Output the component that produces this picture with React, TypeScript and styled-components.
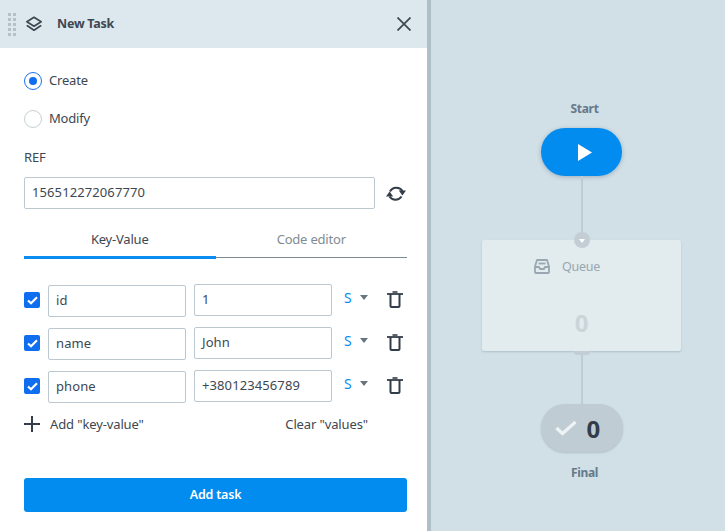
import React from 'react';
import styled, { createGlobalStyle } from 'styled-components';

const Global = createGlobalStyle`
  html, body { margin: 0; padding: 0; width: 725px; height: 531px; overflow: hidden; background: #d1dfe6; }
  * { box-sizing: border-box; }
  body { font-family: "Noto Sans", "Open Sans", sans-serif; color: #3d4752; }
`;

const Page = styled.div`
  display: flex;
  width: 725px;
  height: 531px;
`;
const Panel = styled.div`
  width: 427px;
  height: 531px;
  background: #fff;
  display: flex;
  flex-direction: column;
  flex: none;
`;
const Divider = styled.div`
  width: 4px;
  flex: none;
  background: #aebfc7;
`;
const Header = styled.div`
  height: 48px;
  background: #dde8ee;
  display: flex;
  align-items: center;
  padding: 0 16px 0 8px;
  flex: none;
`;
const Grip = styled.div`
  display: grid;
  grid-template-columns: 3px 3px;
  gap: 2px 2px;
  margin-right: 10px;
  span { width: 3px; height: 3px; background: #b4c1c8; display: block; }
`;
const Title = styled.div`
  font-size: 12.5px;
  font-weight: 700;
  letter-spacing: -0.25px;
  margin-left: 15px;
  flex: 1;
  position: relative;
  top: -1px;
`;
const Body = styled.div`
  padding: 0 20px 0 24px;
  display: flex;
  flex-direction: column;
  flex: 1;
`;
const RadioRow = styled.div<{ $top: number }>`
  display: flex;
  align-items: center;
  gap: 7px;
  height: 18px;
  margin-top: ${p => p.$top}px;
  font-size: 13px;
  letter-spacing: -0.2px;
`;
const RadioText = styled.span`
  position: relative;
  top: -1px;
`;
const RadioDot = styled.div<{ $on?: boolean }>`
  width: 18px;
  height: 18px;
  border-radius: 50%;
  border: 1px solid ${p => (p.$on ? '#1a73f0' : '#c5d0d6')};
  display: flex;
  align-items: center;
  justify-content: center;
  &::after {
    content: '';
    width: 8px;
    height: 8px;
    border-radius: 50%;
    background: ${p => (p.$on ? '#0f6df0' : 'transparent')};
  }
`;
const RefLabel = styled.div`
  font-size: 13px;
  letter-spacing: -0.2px;
  margin-top: 20px;
  height: 18px;
  line-height: 18px;
`;
const RefRow = styled.div`
  display: flex;
  align-items: center;
  margin-top: 11px;
`;
const Field = styled.div<{ $w: number; $shift?: number }>`
  width: ${p => p.$w}px;
  height: 32px;
  border: 1px solid #bcc8cf;
  border-radius: 2px;
  padding: 0 7px 2px;
  font-size: 13px;
  letter-spacing: 0.1px;
  display: flex;
  align-items: center;
  flex: none;
  position: relative;
  top: ${p => p.$shift ?? 0}px;
  background: #fff;
`;
const RefreshBtn = styled.div`
  margin-left: 11px;
  width: 20px;
  height: 18px;
  display: flex;
  position: relative;
  top: 1px;
`;
const Tabs = styled.div`
  display: flex;
  width: 383px;
  height: 49px;
  border-bottom: 1px solid #7d8a91;
`;
const Tab = styled.div<{ $active?: boolean }>`
  width: 50%;
  height: ${p => (p.$active ? '50px' : '49px')};
  padding-top: 21px;
  text-align: center;
  font-size: 13px;
  line-height: 18px;
  letter-spacing: -0.2px;
  color: ${p => (p.$active ? '#3d4752' : '#808c93')};
  border-bottom: ${p => (p.$active ? '3px solid #0a8cf0' : 'none')};
`;
const Rows = styled.div`
  margin-top: 27px;
  display: flex;
  flex-direction: column;
  gap: 11px;
`;
const Row = styled.div`
  display: flex;
  align-items: center;
  height: 32px;
`;
const Check = styled.div`
  width: 16px;
  height: 16px;
  border-radius: 2px;
  background: #0f6df0;
  margin: 0 8px 2px 0;
  display: flex;
  align-items: center;
  justify-content: center;
  flex: none;
`;
const TypeSel = styled.div`
  display: flex;
  align-items: center;
  margin-left: 12px;
  width: 43px;
  color: #0a8cf0;
  font-size: 14px;
  position: relative;
  top: -4px;
  &::after {
    content: '';
    margin-left: 8px;
    border-left: 4.5px solid transparent;
    border-right: 4.5px solid transparent;
    border-top: 5px solid #66757e;
  }
`;
const ValueGap = styled.div`
  width: 8px;
  flex: none;
`;
const Footer = styled.div`
  display: flex;
  align-items: center;
  margin-top: 11px;
  height: 20px;
  font-size: 13px;
  letter-spacing: -0.12px;
`;
const AddLabel = styled.span`
  margin-left: 10px;
  flex: 1;
`;
const ClearLabel = styled.span`
  margin-right: 39px;
`;
const AddButton = styled.div`
  width: 383px;
  height: 34px;
  margin-top: 44px;
  background: #038cf0;
  border-radius: 3px;
  color: #fff;
  font-size: 12.5px;
  font-weight: 600;
  letter-spacing: -0.2px;
  display: flex;
  align-items: center;
  justify-content: center;
  padding-bottom: 2px;
`;

const Canvas = styled.div`
  flex: 1;
  background: #d1dfe6;
  display: flex;
  flex-direction: column;
  align-items: center;
  padding: 100px 44px 0 51px;
`;
const NodeLabel = styled.div`
  font-size: 12px;
  font-weight: 700;
  letter-spacing: -0.3px;
  color: #64798a;
  height: 18px;
  line-height: 18px;
  position: relative;
  left: 3px;
`;
const StartPill = styled.div`
  width: 81px;
  height: 48px;
  border-radius: 24px;
  margin-top: 10px;
  background: #038cf0;
  box-shadow: 0 1px 4px rgba(60, 90, 110, 0.35);
  display: flex;
  align-items: center;
  justify-content: center;
  padding-left: 6px;
`;
const Line = styled.div<{ $h: number; $top?: number }>`
  width: 2px;
  height: ${p => p.$h}px;
  margin-top: ${p => p.$top ?? 0}px;
  background: #bfccd3;
  flex: none;
`;
const Card = styled.div`
  width: 199px;
  height: 111px;
  background: #e2ebee;
  border-radius: 2px;
  box-shadow: 0 1px 2px rgba(80, 100, 115, 0.25);
  position: relative;
  display: flex;
  flex-direction: column;
  align-items: center;
  flex: none;
  margin-top: 6px;
`;
const Port = styled.div`
  position: absolute;
  top: -8px;
  left: 92px;
  width: 16px;
  height: 16px;
  border-radius: 50%;
  background: #c2ced4;
  display: flex;
  align-items: center;
  justify-content: center;
  &::after {
    content: '';
    margin-top: 1px;
    border-left: 3px solid transparent;
    border-right: 3px solid transparent;
    border-top: 4px solid #fff;
  }
`;
const BottomPort = styled.div`
  position: absolute;
  bottom: -4px;
  left: 92px;
  width: 16px;
  height: 4px;
  background: #c2ced4;
  border-radius: 0 0 3px 3px;
`;
const QueueRow = styled.div`
  display: flex;
  align-items: center;
  align-self: flex-start;
  margin: 17px 0 0 52px;
  height: 18px;
  color: #98a7b0;
  font-size: 12.5px;
  letter-spacing: -0.25px;
  gap: 12px;
`;
const QueueCount = styled.div`
  margin-top: 33px;
  font-size: 24px;
  font-weight: 700;
  line-height: 30px;
  color: #cad5da;
`;
const FinalPill = styled.div`
  width: 82px;
  height: 48px;
  border-radius: 24px;
  background: #bfccd3;
  box-shadow: 0 1px 2px rgba(80, 100, 115, 0.25);
  display: flex;
  align-items: center;
  padding-left: 14px;
  gap: 10px;
  flex: none;
  font-size: 24px;
  font-weight: 700;
  color: #333d49;
`;
const FinalLabel = styled(NodeLabel)`
  margin-top: 12px;
`;

const rows = [
  ['id', '1'],
  ['name', 'John'],
  ['phone', '+380123456789'],
];

const TrashIcon = () => (
  <svg width="16" height="17" viewBox="0 0 16 17" fill="none" stroke="#333d49" strokeWidth="2" style={{ position: 'relative', top: -2 }}>
    <path d="M0 3H16" strokeWidth="1.8" />
    <path d="M5.5 1H10.5" strokeWidth="1.6" />
    <path d="M3.5 3V15C3.5 15.6 3.9 16 4.5 16H11.5C12.1 16 12.5 15.6 12.5 15V3" />
  </svg>
);

export default function App() {
  return (
    <Page>
      <Global />
      <Panel>
        <Header>
          <Grip>
            {Array.from({ length: 10 }).map((_, i) => <span key={i} />)}
          </Grip>
          <svg width="16" height="16" viewBox="0 0 18 18" fill="none" stroke="#3d4752" strokeWidth="1.9" strokeLinejoin="round" strokeLinecap="round">
            <path d="M9 1.5L17 6.5L9 11.5L1 6.5Z" />
            <path d="M1.5 11L9 16L16.5 11" />
          </svg>
          <Title>New Task</Title>
          <svg width="14" height="14" viewBox="0 0 14 14" stroke="#3d4752" strokeWidth="1.7" fill="none">
            <path d="M0.5 0.5L13.5 13.5M13.5 0.5L0.5 13.5" />
          </svg>
        </Header>
        <Body>
          <RadioRow $top={24}><RadioDot $on /><RadioText>Create</RadioText></RadioRow>
          <RadioRow $top={20}><RadioDot /><RadioText>Modify</RadioText></RadioRow>
          <RefLabel>REF</RefLabel>
          <RefRow>
            <Field $w={351}>156512272067770</Field>
            <RefreshBtn>
              <svg width="20" height="18" viewBox="0 0 20 18" fill="none" stroke="#333d49" strokeWidth="2">
                <path d="M4 6.5A7 6.5 0 0 1 16.5 6" />
                <path d="M3.5 11.5A7 6.5 0 0 0 15.5 11.5" />
                <path d="M12.8 5.5H20L16.4 10.5Z" fill="#333d49" stroke="none" />
                <path d="M0 11.5H7.2L3.6 6.5Z" fill="#333d49" stroke="none" />
              </svg>
            </RefreshBtn>
          </RefRow>
          <Tabs>
            <Tab $active>Key-Value</Tab>
            <Tab>Code editor</Tab>
          </Tabs>
          <Rows>
            {rows.map(([k, v]) => (
              <Row key={k}>
                <Check>
                  <svg width="11" height="9" viewBox="0 0 11 9" fill="none" stroke="#fff" strokeWidth="2.2">
                    <path d="M1 4.5L4 7.2L10 1.2" />
                  </svg>
                </Check>
                <Field $w={138}>{k}</Field>
                <ValueGap />
                <Field $w={138} $shift={-1}>{v}</Field>
                <TypeSel>S</TypeSel>
                <TrashIcon />
              </Row>
            ))}
          </Rows>
          <Footer>
            <svg width="16" height="16" viewBox="0 0 16 16" stroke="#333d49" strokeWidth="2" fill="none">
              <path d="M8 0V16M0 8H16" />
            </svg>
            <AddLabel>Add "key-value"</AddLabel>
            <ClearLabel>Clear "values"</ClearLabel>
          </Footer>
          <AddButton>Add task</AddButton>
        </Body>
      </Panel>
      <Divider />
      <Canvas>
        <NodeLabel>Start</NodeLabel>
        <StartPill>
          <svg width="14" height="17" viewBox="0 0 14 17"><path d="M0 0L14 8.5L0 17Z" fill="#fff" /></svg>
        </StartPill>
        <Line $h={58} />
        <Card>
          <Port />
          <QueueRow>
            <svg width="16" height="15" viewBox="0 0 16 15" fill="none" stroke="#98a7b0" strokeWidth="1.8" strokeLinejoin="round">
              <path d="M3 1H13L15 7.5V13C15 13.6 14.6 14 14 14H2C1.4 14 1 13.6 1 13V7.5Z" />
              <path d="M1 8H5L6 10H10L11 8H15" />
              <path d="M4.5 4.5H11.5" />
            </svg>
            Queue
          </QueueRow>
          <QueueCount>0</QueueCount>
          <BottomPort />
        </Card>
        <Line $h={49} $top={4} />
        <FinalPill>
          <svg width="22" height="16" viewBox="0 0 22 16" fill="none" stroke="#eef3f5" strokeWidth="3.2">
            <path d="M1.5 8L7.5 13.5L20.5 2" />
          </svg>
          0
        </FinalPill>
        <FinalLabel>Final</FinalLabel>
      </Canvas>
    </Page>
  );
}
